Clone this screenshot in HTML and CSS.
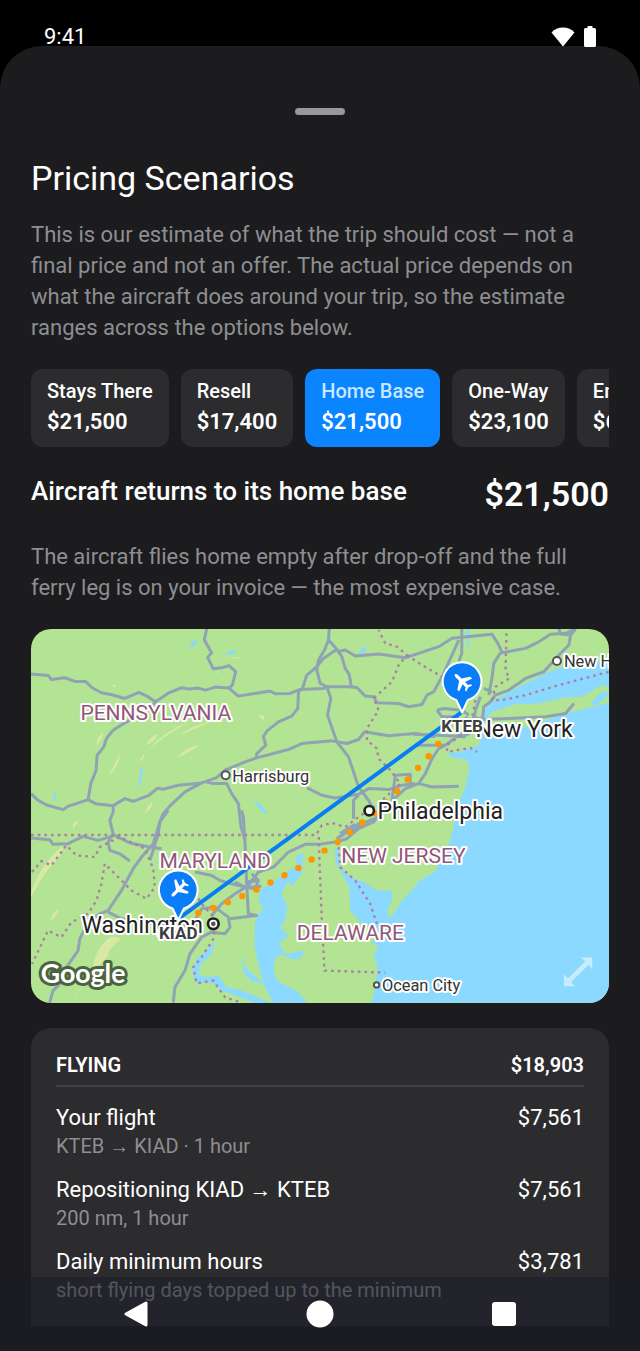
FILE: index.html
```html
<!DOCTYPE html>
<html lang="en">
<head>
<meta charset="utf-8">
<meta name="viewport" content="width=device-width, initial-scale=1">
<title>Pricing Scenarios</title>
<link rel="stylesheet" href="styles.css">
</head>
<body>
<div class="screen">
  <header class="status">
    <span class="time">9:41</span>
    <span class="status-icons">
      <svg class="wifi" viewBox="0 0 24 20" aria-hidden="true"><path d="M12 19.500 0.500 5.500C3.500 2.300 7.500 0.500 12 0.500s8.500 1.800 11.500 5z"/></svg>
      <svg class="battery" viewBox="0 0 12 21" aria-hidden="true"><path d="M3.500 0h5v2H10.500Q12 2 12 3.500v16Q12 21 10.500 21h-9Q0 21 0 19.500v-16Q0 2 1.500 2h2z"/></svg>
    </span>
  </header>

  <main class="sheet">
    <div class="handle"></div>
    <div class="content">
      <h1 class="title">Pricing Scenarios</h1>
      <p class="copy">This is our estimate of what the trip should cost — not a final price and not an offer. The actual price depends on what the aircraft does around your trip, so the estimate ranges across the options below.</p>

      <div class="chips">
        <button class="chip" type="button"><span class="chip-name">Stays There</span><span class="chip-price">$21,500</span></button>
        <button class="chip" type="button"><span class="chip-name">Resell</span><span class="chip-price">$17,400</span></button>
        <button class="chip chip-selected" type="button" aria-pressed="true"><span class="chip-name">Home Base</span><span class="chip-price">$21,500</span></button>
        <button class="chip" type="button"><span class="chip-name">One-Way</span><span class="chip-price">$23,100</span></button>
        <button class="chip" type="button"><span class="chip-name">Empty Leg</span><span class="chip-price">$6,900</span></button>
      </div>

      <div class="summary">
        <h2 class="summary-name">Aircraft returns to its home base</h2>
        <strong class="summary-price">$21,500</strong>
      </div>
      <p class="copy copy-detail">The aircraft flies home empty after drop-off and the full ferry leg is on your invoice — the most expensive case.</p>

      <svg class="map" viewBox="19 27 1731 1119" role="img" aria-label="Route map from KTEB to KIAD">
        <rect class="land" x="0" y="0" width="1800" height="1200"/>
        <g class="ridges">
          <path d="M215 375Q215 350 235 338 230 365 215 375zM250 470Q270 430 287 400 280 440 250 470zM345 425Q350 405 360 402 360 415 345 425zM362 375Q380 345 398 342 390 365 362 375zM372 388Q420 330 490 308 420 345 372 388zM455 412Q490 378 525 374 500 395 455 412zM465 345Q500 315 560 305 510 325 465 345zM360 580Q370 550 385 545 378 568 360 580zM262 200 268 192 276 202zM600 110 640 112 655 108 640 117zM700 284 718 288 717 300 704 292zM572 160 582 152 580 158z"/>
          <path d="M145 625Q140 600 162 602 155 612 145 625zM19 815Q50 730 112 678 120 700 80 735 50 770 19 830zM78 900Q80 880 102 864 100 885 78 900zM145 1146Q170 1090 205 1040 210 990 250 955 270 940 287 957 250 985 250 1005 200 1060 175 1090 165 1146z"/>
        </g>
        <g class="water">
          <path d="M1750 120 1700 128 1610 140 1570 155 1500 190 1420 232 1388 255 1374 280 1362 325 1370 345 1360 375 1300 395 1262 400 1280 412 1325 420 1332 445 1320 500 1305 535 1292 580 1284 620 1270 675 1230 752 1180 782 1170 798 1130 840 1105 880 1090 892 1087 870 1102 832 1100 812 1055 810 1015 785 975 770 945 740 940 690 930 680 930 720 952 765 972 800 975 870 1005 905 1058 928 1040 972 1060 975 1045 1003 1057 1040 1050 1100 1038 1146 1750 1146z"/>
          <path d="M835 698 812 705 815 735 775 762 745 785 705 808 700 842 715 862 690 900 688 975 700 1030 715 1090 745 1146 845 1146 820 1115 755 1080 745 1050 750 1015 765 1000 800 1015 825 1015 838 990 780 1000 762 970 790 945 765 920 780 900 787 860 770 820 790 780 800 800 830 760z"/>
          <path d="M492 80 510 58 518 66 505 82zM87 515h7v28h-7zM338 500 350 440 356 448 346 495zM597 105 622 90 640 93 615 104zM660 525 705 550 728 580 712 578 690 545zM998 103 1010 85 1025 78 1018 98zM1321 27h10v55h-7v-25zM650 1000 660 1040 690 1068 720 1090 680 1082 655 1055z"/>
          <path d="M570 960 550 985 515 1015 502 1050 512 1088 560 1085 590 1110 640 1128 690 1146 740 1146 650 1110 605 1100 580 1065 545 1070 522 1065 525 1035 560 1000z"/>
        </g>
        <path class="land" d="M1380 300 1400 275 1470 252 1540 250 1620 232 1670 230 1732 194 1750 205 1750 212 1720 220 1695 250 1710 256 1750 225 1750 248 1690 262 1600 285 1520 315 1450 335 1395 348 1372 335z"/>

        <g class="roads">
          <path d="M19 162 70 166 80 178 120 173 150 184 182 184 202 203 230 218 262 224 300 235 342 217 368 229 392 245 432 218 470 203 492 207 520 204 542 210 570 201 612 204 640 228 735 213 750 221 795 220 825 208 895 205 905 200 970 200 995 202 1020 228 1045 230 1055 248 1120 250 1150 260 1190 253 1205 225 1225 215 1255 160 1300 60"/>
          <path d="M545 27 538 60 560 98 548 112 565 146 590 143 612 137 632 155 622 195 612 204"/>
          <path d="M392 245 370 270 300 308 265 330 245 355 237 380 217 405 214 450 198 490 190 538 212 550 265 556 300 535 325 543 372 525 398 504 415 507 460 495 530 488 575 472 600 450 660 425 695 413 790 388 830 370 920 362 965 370 1000 358 1018 335 1090 347 1170 340 1230 350"/>
          <path d="M19 520 40 540 68 555 116 568 130 558 155 550 190 538M265 556 265 575 255 600 265 640 250 665 255 690 285 700 315 722M530 488 480 515 440 552 415 580 405 605 400 640 383 695 375 720M540 484 565 490 605 490 620 520 640 550 648 620 660 660"/>
          <path d="M912 27 910 60 898 90 880 120 875 150 885 190 905 200 917 235 907 285 935 365 970 410 1000 500 1030 540 1050 580M910 60 935 88 950 110 960 145 972 163 978 198M935 88 895 115 875 140 845 165 832 205 820 215 818 265 800 288 760 305 725 333 715 350 722 375 695 400 695 413M935 95 960 90 990 108 1060 102 1140 113 1180 100 1240 80 1280 55 1400 43 1420 75 1430 98 1500 85 1535 68 1575 43 1620 40 1650 27"/>
          <path d="M1309 27 1309 100 1295 140M1600 27 1605 42 1635 45 1650 27M1635 45 1630 75 1600 105 1555 155 1500 175 1450 210 1410 225 1395 245 1375 260 1372 290 1340 320 1300 345M1425 98 1405 130 1400 170 1390 225M1375 205 1400 215M1365 230 1350 270 1345 310 1320 345"/>
          <path d="M1645 250 1620 280 1560 290 1450 295 1370 298 1340 290M1235 270 1255 265 1310 270 1330 285M1235 270 1250 290 1300 290M1170 375 1210 375 1260 375 1240 385 1220 415 1200 460 1180 490 1220 500 1300 498"/>
          <path d="M1165 342 1240 345 1320 350M1300 345 1260 375M1180 490 1140 505 1080 560 1045 605 1000 625 965 655 930 665 880 672 840 672 790 695 745 740 700 755 670 795 630 820 590 850 560 885"/>
          <path d="M845 502 890 525 930 533 1000 522 1030 505 1090 508 1130 495 1170 490M1100 540 1110 465 1155 462 1155 500M1000 525 985 540 985 570 985 595M970 640 1010 610 1060 590"/>
          <path d="M650 570 655 590 660 670 665 790M585 780 620 790 660 800 700 800 708 795M510 755 560 765 585 780M665 790 670 880 695 885 615 895M680 760 700 780 690 805 660 800 630 785"/>
          <path d="M19 653 75 658 85 672 130 670 175 648 220 660 270 645 315 668 375 680 410 685M430 570 405 605 385 670 350 710 325 745 290 810 250 870 225 880 190 905 165 955 160 990 125 1040 115 1080 85 1110 75 1146"/>
          <path d="M445 1146 450 1100 480 1050 495 1000 530 950 560 935 600 940 615 920 610 890 570 860 530 865 510 900 530 940M250 875 290 895 350 905 510 920"/>
        </g>
        <g class="road-core">
          <path d="M1320 290 1350 330 1310 350M660 785 700 780M935 655 1010 605M945 640 990 612"/>
        </g>
        <g class="borders">
          <path d="M19 644H872L890 615 920 608 960 620 1000 590 1060 550 1125 490 1095 450 1060 415 1055 385 1025 360 1025 325 1060 270 1045 235 1100 185 1120 135 1145 105 1115 80 1080 70 1060 30"/>
          <path d="M1145 105 1190 135 1250 170M1443 40 1440 150 1452 175 1410 200 1400 240 1430 240 1500 225 1600 195 1750 155M1350 240 1335 320 1300 350 1265 375 1265 395 1335 383 1355 395"/>
          <path d="M881 650 883 720 890 900 898 1050 1080 1056M940 680 945 740 990 780 1035 850 1055 910"/>
          <path d="M22 755 50 722 80 735 125 675 155 705 210 710 225 680 285 650 360 685 385 745 390 800 365 835 320 810 280 770 240 730 230 790 215 840 190 880 140 905 110 950 70 930 22 1030"/>
          <path d="M500 800 530 850 575 900 565 955 530 1010 505 1040 515 1088 565 1080 600 1130 650 1146"/>
        </g>

        <path class="route" d="M460 895 1310 275"/>
        <path class="track" d="M1239 371 1210 408 1178 443 1146 479 1115 513 1085 545 1048 580 1010 607 972 637 936 666 896 692 857 719 817 744 775 766 733 788 691 809 647 829 604 847 560 864 516 879"/>

        <g class="places">
          <circle cx="602" cy="465" r="12"/><circle cx="1032" cy="571" r="14" class="place-big"/><circle cx="1594" cy="123" r="12"/><circle cx="1054" cy="1093" r="8"/>
          <circle cx="565" cy="910" r="16" class="place-big"/><circle cx="565" cy="910" r="4" class="place-dot"/>
        </g>
        <g class="states">
          <text x="167" y="301">PENNSYLVANIA</text>
          <text x="404" y="744">MARYLAND</text>
          <text x="948" y="728">NEW JERSEY</text>
          <text x="815" y="957">DELAWARE</text>
        </g>
        <g class="towns">
          <text x="622" y="485">Harrisburg</text>
          <text x="1615" y="142">New Haven</text>
          <text x="1070" y="1112">Ocean City</text>
        </g>
        <g class="cities">
          <text x="1350" y="349">New York</text>
          <text x="1057" y="597">Philadelphia</text>
          <text x="170" y="938">Washington</text>
        </g>
        <g id="pin-kteb">
          <path class="pin" d="M1310 277 1293 240A58 58 0 1 1 1327 240z"/>
          <path class="plane" transform="translate(1310 184) rotate(-45) scale(2.500)" d="M0-12C1.200-12 2-10.500 2-9V-3L11 3V6L2 3V8L5 10V12L0 10.500-5 12V10L-2 8V3L-11 6V3L-2-3V-9C-2-10.500-1.200-12 0-12z"/>
        </g>
        <g id="pin-kiad">
          <path class="pin" d="M460 329 443 294A58 58 0 1 1 477 294z" transform="translate(0 570)"/>
          <path class="plane" transform="translate(462 806) rotate(-135) scale(2.500)" d="M0-12C1.200-12 2-10.500 2-9V-3L11 3V6L2 3V8L5 10V12L0 10.500-5 12V10L-2 8V3L-11 6V3L-2-3V-9C-2-10.500-1.200-12 0-12z"/>
        </g>
        <g class="codes">
          <text x="1310" y="334">KTEB</text>
          <text x="460" y="956">KIAD</text>
        </g>
        <text class="brand" x="48" y="1088">Google</text>
        <path class="expand" d="M1666 1011h34v34l-12-12-52 52 12 12h-33v-36l12 13 52-52z"/>
      </svg>

      <section class="card">
        <div class="card-head"><h3 class="card-title">FLYING</h3><span>$18,903</span></div>
        <div class="item"><div><div class="item-name">Your flight</div><div class="item-note">KTEB → KIAD · 1 hour</div></div><span class="item-name">$7,561</span></div>
        <div class="item"><div><div class="item-name">Repositioning KIAD → KTEB</div><div class="item-note">200 nm, 1 hour</div></div><span class="item-name">$7,561</span></div>
        <div class="item"><div><div class="item-name">Daily minimum hours</div><div class="item-note">short flying days topped up to the minimum</div></div><span class="item-name">$3,781</span></div>
      </section>
    </div>
  </main>

  <nav class="navbar" aria-label="System">
    <button class="nav-button" type="button" aria-label="Back"><svg viewBox="0 0 28 28"><path d="M24 3v22L4 14z" class="nav-back"/></svg></button>
    <button class="nav-button" type="button" aria-label="Home"><svg viewBox="0 0 28 28"><circle cx="14" cy="14" r="13.500"/></svg></button>
    <button class="nav-button" type="button" aria-label="Recents"><svg viewBox="0 0 28 28"><rect x="2" y="2" width="24" height="24" rx="3"/></svg></button>
  </nav>
</div>
</body>
</html>
```
FILE: styles.css
```css
* { box-sizing: border-box; }
body { margin: 0; background: #000; color: #fff; font-family: Roboto, "Liberation Sans", sans-serif; }
h1, h2, h3, p { margin: 0; }
button { border: 0; padding: 0; background: none; color: inherit; font: inherit; }

.screen { position: relative; display: flex; flex-direction: column; height: 100vh; padding-top: 46px; overflow: hidden; }
.status { position: absolute; z-index: 2; top: 0; left: 0; right: 0; display: flex; justify-content: space-between; align-items: flex-end; height: 50px; padding: 0 44px; }
.time { font-size: 22px; line-height: 26px; }
.status-icons { display: flex; align-items: flex-end; gap: 9px; padding-bottom: 3px; }
.status svg { display: block; fill: #fff; }
.wifi { width: 24px; height: 20px; }
.battery { width: 12px; height: 21px; }

.sheet { flex: 1; min-height: 0; display: flex; flex-direction: column; padding: 62px 31px 25px; background: #1c1c1e; border-radius: 42px 42px 0 0; }
.handle { flex: none; align-self: center; width: 50px; height: 7px; border-radius: 4px; background: #98979c; }
.content { flex: 1; min-height: 0; margin-top: 41px; overflow: hidden; }
.title { font-size: 34px; line-height: 44px; font-weight: 400; }
.copy { margin-top: 19px; font-size: 22px; line-height: 31px; color: #8e8e93; }

.chips { display: flex; gap: 12px; margin-top: 26px; overflow: hidden; }
.chip { flex: none; display: flex; flex-direction: column; align-items: flex-start; padding: 8px 16px; border-radius: 12px; background: #2c2c2e; text-align: left; }
.chip-selected { background: #0a84ff; }
.chip-name { font-size: 20px; line-height: 28px; font-weight: 500; }
.chip-selected .chip-name { color: #c8e8ff; }
.chip-price { font-size: 22px; line-height: 34px; font-weight: 600; }

.summary { display: flex; justify-content: space-between; align-items: flex-start; margin-top: 26px; }
.summary-name { font-size: 26px; line-height: 36px; font-weight: 500; }
.summary-price { font-size: 34px; line-height: 42px; font-weight: 600; }
.copy-detail { margin-top: 26px; }

.map { display: block; width: 100%; margin-top: 26px; border-radius: 20px; }
.land { fill: #b3e493; }
.water { fill: #8cd9ff; }
.ridges { fill: #d9e8a5; }
.roads { fill: none; stroke: #8fa3b4; stroke-width: 9; stroke-linejoin: round; }
.road-core { fill: none; stroke: #8fa3c0; stroke-width: 10; }
.borders { fill: none; stroke: #ad7fa8; stroke-width: 7; stroke-dasharray: 8 12; }
.route { stroke: #0a7df5; stroke-width: 12; }
.track { fill: none; stroke: #ff9500; stroke-width: 19; stroke-linecap: round; stroke-dasharray: 0 47; }
.places { fill: #fff; stroke: #555; stroke-width: 6; }
.places .place-big { stroke: #222; stroke-width: 8; }
.places .place-dot { fill: #222; }
.map text { paint-order: stroke; stroke: #fff; stroke-width: 12; stroke-linejoin: round; }
.states { font-size: 63px; fill: #925678; }
.towns { font-size: 49px; fill: #333; }
.cities { font-size: 69px; fill: #222; }
.codes { font-size: 51px; font-weight: 700; fill: #3c4043; text-anchor: middle; }
.pin { fill: #0a7df8; stroke: #fff; stroke-width: 6; stroke-linejoin: round; }
.plane { fill: #fff; }
.map .brand { font-family: Lato, sans-serif; font-size: 80px; font-weight: 700; fill: #fff; stroke: #4b643f; stroke-width: 18; }
.expand { fill: #c5ecff; }

.card { margin-top: 25px; padding: 25px 25px 40px; border-radius: 20px; background: #2c2c2e; }
.card-head { display: flex; justify-content: space-between; padding-bottom: 8px; border-bottom: 2px solid #424245; font-size: 20px; line-height: 24px; font-weight: 600; }
.card-title { font: inherit; }
.item { display: flex; justify-content: space-between; margin-top: 16px; }
.item-name { font-size: 22px; line-height: 30px; }
.item-note { font-size: 20px; line-height: 26px; color: #8e8e93; }

.navbar { position: absolute; z-index: 3; bottom: 0; left: 0; right: 0; display: flex; justify-content: center; gap: 156px; height: 74px; padding-top: 23px; background: rgba(26, 28, 40, .5); }
.nav-button { width: 28px; height: 28px; }
.nav-button svg { display: block; width: 28px; height: 28px; fill: #fff; }
.nav-back { stroke: #fff; stroke-width: 3; stroke-linejoin: round; }
```
